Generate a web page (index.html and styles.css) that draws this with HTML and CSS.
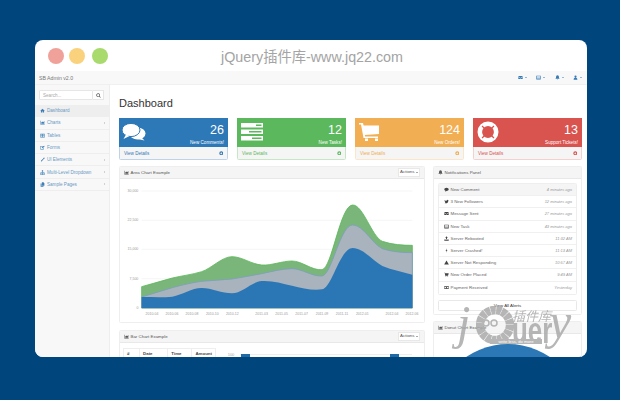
FILE: index.html
```html
<!DOCTYPE html>
<html lang="en">
<head>
    <meta charset="UTF-8">
    <title>SB Admin v2.0</title>
    <link rel="stylesheet" href="styles.css">
</head>
<body>
    <svg class="defs" width="0" height="0">
        <symbol id="i-home" viewBox="0 0 16 16"><path d="M8 2 1 8.500l1 1L3 8.700V14h4v-4h2v4h4V8.700l1 .8 1-1z"/></symbol>
        <symbol id="i-chart" viewBox="0 0 16 16"><path d="M1 2h1.500v11H15v1.500H1zM4 12V8l3-3 3 2 4-4v9z"/></symbol>
        <symbol id="i-table" viewBox="0 0 16 16"><path d="M1 2h14v12H1zm1.500 3v2H7V5zm6.500 0v2h4.500V5zM2.500 9v3H7V9zM9 9v3h4.500V9z" fill-rule="evenodd"/></symbol>
        <symbol id="i-edit" viewBox="0 0 16 16"><path d="M1 3h9v1.500H2.500v8h8V9H12v5H1zM6 8l7-6 2 2-7 6H6z"/></symbol>
        <symbol id="i-wrench" viewBox="0 0 16 16"><path d="M14 2c1 1.500.5 4-2 4.500L5 14c-1 1-3-1-2-2l7.500-7C11 2.500 13 1 14 2z"/></symbol>
        <symbol id="i-sitemap" viewBox="0 0 16 16"><path d="M6 1h4v4H8.700v2.500H14V11h1v4h-4v-4h1.500V9H8.700v2H10v4H6v-4h1.300V9H3.500v2H5v4H1v-4h1V7.500h5.300V5H6z"/></symbol>
        <symbol id="i-files" viewBox="0 0 16 16"><path d="M6 1h5l3 3v8H6zM2 5h3v8h6v2H2z"/></symbol>
        <symbol id="i-mail" viewBox="0 0 16 16"><path d="M1 3h14v2L8 9.500 1 5zm0 3.500L8 11l7-4.500V13H1z"/></symbol>
        <symbol id="i-tasks" viewBox="0 0 16 16"><path d="M1 2h14v12H1zm2 2v2h10V4zm0 3.500v2h10v-2zM3 11v1.500h10V11z" fill-rule="evenodd"/></symbol>
        <symbol id="i-bell" viewBox="0 0 16 16"><path d="M8 1c3 0 4.500 2.500 4.500 5 0 3 1 4.500 2.500 6H1c1.500-1.500 2.500-3 2.500-6C3.500 3.500 5 1 8 1zM6.500 13h3c0 2-3 2-3 0z"/></symbol>
        <symbol id="i-user" viewBox="0 0 16 16"><path d="M8 1.500a3.500 3.500 0 1 1 0 7 3.500 3.500 0 0 1 0-7zM2 15c0-4 2-6 6-6s6 2 6 6z"/></symbol>
        <symbol id="i-comment" viewBox="0 0 16 16"><path d="M8 2c4 0 7 2.300 7 5.500S12 13 8 13l-4 2 .8-2.700C2.500 11.500 1 9.700 1 7.500 1 4.300 4 2 8 2z"/></symbol>
        <symbol id="i-twitter" viewBox="0 0 16 16"><path d="M15 4c-.5.300-1 .5-1.600.5.600-.4 1-.9 1.200-1.600-.5.300-1.100.6-1.800.7a2.800 2.800 0 0 0-4.800 2.600C5.700 6 3.600 5 2.200 3.200c-.8 1.300-.4 3 .9 3.800-.4 0-.8-.1-1.200-.3 0 1.400 1 2.500 2.200 2.800-.4.100-.8.100-1.200 0 .3 1.100 1.400 1.900 2.600 2-1.200.9-2.600 1.300-4.100 1.100C7 15.500 14 13 13.800 5.600c.5-.4.900-1 1.200-1.600z"/></symbol>
        <symbol id="i-upload" viewBox="0 0 16 16"><path d="M8 1l4 5H9.500v4h-3V6H4zM1 11h4v1h6v-1h4v4H1z"/></symbol>
        <symbol id="i-bolt" viewBox="0 0 16 16"><path d="M9.500 1 5 9h3l-1.500 6L11 6.500H8z"/></symbol>
        <symbol id="i-warn" viewBox="0 0 16 16"><path d="M8 1.500 15.500 14.500H.5z"/></symbol>
        <symbol id="i-cart" viewBox="0 0 16 16"><path d="M1 2h2.500l.4 2H15l-1.500 6H5.300l.3 1.500H13V13H4.300L2.300 3.500H1zM5 13.500h2V15H5zm6 0h2V15h-2z"/></symbol>
        <symbol id="i-money" viewBox="0 0 16 16"><path d="M1 3h14v10H1zm1.500 2.500v5h11v-5zM8 6a2 2 0 1 1 0 4 2 2 0 0 1 0-4z" fill-rule="evenodd"/></symbol>
        <symbol id="i-go" viewBox="0 0 16 16"><path d="M8 1a7 7 0 1 1 0 14A7 7 0 0 1 8 1zm-.500 3L6 5.500 7.500 7H4v2h3.500L6 10.500 7.500 12l4-4z" fill-rule="evenodd"/></symbol>
        <symbol id="i-search" viewBox="0 0 16 16"><path d="M7 1a6 6 0 0 1 4.800 9.500l3.400 3.300-1.500 1.500-3.300-3.400A6 6 0 1 1 7 1zm0 2.200a3.800 3.800 0 1 0 0 7.600 3.800 3.800 0 0 0 0-7.600z" fill-rule="evenodd"/></symbol>
    </svg>

    <div class="window">
        <div class="titlebar">
            <div class="dots">
                <span class="dot dot-red"></span>
                <span class="dot dot-yellow"></span>
                <span class="dot dot-green"></span>
            </div>
            <div class="site-title">jQuery插件库-www.jq22.com</div>
        </div>

        <nav class="navbar">
            <span class="brand">SB Admin v2.0</span>
            <div class="nav-icons">
                <span class="nav-item"><svg class="ico"><use href="#i-mail"/></svg><i class="caret"></i></span>
                <span class="nav-item"><svg class="ico"><use href="#i-tasks"/></svg><i class="caret"></i></span>
                <span class="nav-item"><svg class="ico"><use href="#i-bell"/></svg><i class="caret"></i></span>
                <span class="nav-item"><svg class="ico"><use href="#i-user"/></svg><i class="caret"></i></span>
            </div>
        </nav>

        <div class="layout">
            <aside class="sidebar">
                <div class="search">
                    <span class="search-input">Search...</span>
                    <span class="search-btn"><svg class="ico"><use href="#i-search"/></svg></span>
                </div>
                <ul class="side-menu">
                    <li class="active"><svg class="ico"><use href="#i-home"/></svg>Dashboard</li>
                    <li><svg class="ico"><use href="#i-chart"/></svg>Charts<i class="arrow"></i></li>
                    <li><svg class="ico"><use href="#i-table"/></svg>Tables</li>
                    <li><svg class="ico"><use href="#i-edit"/></svg>Forms</li>
                    <li><svg class="ico"><use href="#i-wrench"/></svg>UI Elements<i class="arrow"></i></li>
                    <li><svg class="ico"><use href="#i-sitemap"/></svg>Multi-Level Dropdown<i class="arrow"></i></li>
                    <li><svg class="ico"><use href="#i-files"/></svg>Sample Pages<i class="arrow"></i></li>
                </ul>
            </aside>

            <main class="content">
                <h1>Dashboard</h1>

                <section class="cards">
                    <div class="card card-blue">
                        <div class="card-top">
                            <svg class="card-icon" viewBox="0 0 24 18">
                                <ellipse cx="15.500" cy="10.500" rx="8" ry="6"/>
                                <path d="M19 14l3.500 3.500-7-1.500z"/>
                                <ellipse class="cut" cx="9" cy="7" rx="9" ry="6.600"/>
                                <path class="front" d="M4 11.500 1.500 16l6-3z"/>
                            </svg>
                            <div class="card-text"><b>26</b><span>New Comments!</span></div>
                        </div>
                        <div class="card-foot">View Details<svg class="ico"><use href="#i-go"/></svg></div>
                    </div>
                    <div class="card card-green">
                        <div class="card-top">
                            <svg class="card-icon" viewBox="0 0 24 18">
                                <path d="M1 0h22v4.500H1zM1 6.500h22V11H1zM1 13h22v4.500H1z"/>
                                <path class="slit" d="M16 1.500h5.500v1.500H16zM9 8h12.500v1.500H9zM12 14.500h9.500V16H12z"/>
                            </svg>
                            <div class="card-text"><b>12</b><span>New Tasks!</span></div>
                        </div>
                        <div class="card-foot">View Details<svg class="ico"><use href="#i-go"/></svg></div>
                    </div>
                    <div class="card card-orange">
                        <div class="card-top">
                            <svg class="card-icon" viewBox="0 0 24 18">
                                <path d="M1 0h4l.6 2.500H21V11L6.800 12l.3 1.500H20V15H5.500L3 1.500H1zM7 15.500h3V18H7zm10 0h3V18h-3z"/>
                            </svg>
                            <div class="card-text"><b>124</b><span>New Orders!</span></div>
                        </div>
                        <div class="card-foot">View Details<svg class="ico"><use href="#i-go"/></svg></div>
                    </div>
                    <div class="card card-red">
                        <div class="card-top">
                            <svg class="card-icon" viewBox="0 0 22 22">
                                <circle cx="11" cy="11" r="8.200" fill="none" stroke="#fff" stroke-width="4.600"/>
                                <path class="slit" d="M5.500 4.500l3 3-.9.900-3-3zM16.500 4.500l-3 3 .9.900 3-3zM5.500 17.500l3-3-.9-.900-3 3zM16.500 17.500l-3-3 .9-.900 3 3z"/>
                            </svg>
                            <div class="card-text"><b>13</b><span>Support Tickets!</span></div>
                        </div>
                        <div class="card-foot">View Details<svg class="ico"><use href="#i-go"/></svg></div>
                    </div>
                </section>

                <div class="columns">
                    <div class="col-left">
                        <section class="panel area-panel">
                            <div class="panel-head"><span><svg class="ico"><use href="#i-chart"/></svg>Area Chart Example</span><span class="btn-actions">Actions<i class="caret"></i></span></div>
                            <svg class="area-chart" viewBox="30 57 912 432">
                                <g class="grid">
                                    <path d="M95 93H907M95 181H907M95 268H907M95 356H907M95 444H907"/>
                                </g>
                                <g class="labels y-labels">
                                    <text x="85" y="96">30,000</text>
                                    <text x="85" y="184">22,500</text>
                                    <text x="85" y="271">15,000</text>
                                    <text x="85" y="359">7,500</text>
                                    <text x="85" y="447">0</text>
                                </g>
                                <path class="area-green" d="M95 380C125 372 157 362 187 354C217 347 245 344 275 335C305 325 336 290 366 290C396 290 425 313 455 315C485 317 516 303 546 303C576 303 606 332 636 329C666 326 690 135 728 135C760 135 785 230 817 244C847 254 877 256 907 256V444H95Z"/>
                                <path class="area-gray" d="M95 411C125 402 157 392 187 383C217 375 245 368 275 364C305 361 336 360 366 357C396 352 425 347 455 341C485 335 516 326 546 326C576 326 606 350 636 348C666 345 690 195 728 195C760 195 785 250 817 266C847 276 877 278 907 278V444H95Z"/>
                                <path class="area-blue" d="M95 411C125 411 157 413 187 410C217 405 245 384 275 384C305 384 336 400 366 400C396 400 425 365 455 363C485 361 516 370 546 377C576 384 606 392 636 388C666 384 690 264 728 264C760 264 785 300 817 318C847 330 877 336 907 344V444H95Z"/>
                                <g class="labels x-labels">
                                    <text x="126" y="464">2010-04</text>
                                    <text x="186" y="464">2010-06</text>
                                    <text x="246" y="464">2010-08</text>
                                    <text x="307" y="464">2010-10</text>
                                    <text x="367" y="464">2010-12</text>
                                    <text x="455" y="464">2011-03</text>
                                    <text x="515" y="464">2011-05</text>
                                    <text x="575" y="464">2011-07</text>
                                    <text x="636" y="464">2011-09</text>
                                    <text x="696" y="464">2011-11</text>
                                    <text x="757" y="464">2012-01</text>
                                    <text x="846" y="464">2012-04</text>
                                    <text x="906" y="464">2012-06</text>
                                </g>
                            </svg>
                        </section>

                        <section class="panel">
                            <div class="panel-head"><span><svg class="ico"><use href="#i-chart"/></svg>Bar Chart Example</span><span class="btn-actions">Actions<i class="caret"></i></span></div>
                            <div class="bar-body">
                                <table class="bar-table">
                                    <tr><th class="c-num">#</th><th class="c-date">Date</th><th class="c-time">Time</th><th>Amount</th></tr>
                                </table>
                                <svg class="bar-chart" viewBox="0 0 197 30">
                                    <text x="15" y="7">100</text>
                                    <path d="M24 5.500H196"/>
                                    <rect x="25" y="5" width="9" height="25"/>
                                    <rect x="174" y="5" width="9" height="25"/>
                                </svg>
                            </div>
                        </section>
                    </div>

                    <div class="col-right">
                        <section class="panel notif-panel">
                            <div class="panel-head"><span><svg class="ico"><use href="#i-bell"/></svg>Notifications Panel</span></div>
                            <div class="notif-body">
                                <ul class="notif-list">
                                    <li class="first"><span><svg class="ico"><use href="#i-comment"/></svg>New Comment</span><em>4 minutes ago</em></li>
                                    <li><span><svg class="ico"><use href="#i-twitter"/></svg>3 New Followers</span><em>12 minutes ago</em></li>
                                    <li><span><svg class="ico"><use href="#i-mail"/></svg>Message Sent</span><em>27 minutes ago</em></li>
                                    <li><span><svg class="ico"><use href="#i-tasks"/></svg>New Task</span><em>43 minutes ago</em></li>
                                    <li><span><svg class="ico"><use href="#i-upload"/></svg>Server Rebooted</span><em>11:32 AM</em></li>
                                    <li><span><svg class="ico"><use href="#i-bolt"/></svg>Server Crashed!</span><em>11:13 AM</em></li>
                                    <li><span><svg class="ico"><use href="#i-warn"/></svg>Server Not Responding</span><em>10:57 AM</em></li>
                                    <li><span><svg class="ico"><use href="#i-cart"/></svg>New Order Placed</span><em>9:49 AM</em></li>
                                    <li><span><svg class="ico"><use href="#i-money"/></svg>Payment Received</span><em>Yesterday</em></li>
                                </ul>
                                <div class="btn-alerts">View All Alerts</div>
                            </div>
                        </section>

                        <section class="panel">
                            <div class="panel-head"><span><svg class="ico"><use href="#i-chart"/></svg>Donut Chart Example</span></div>
                            <div class="donut-body"><div class="donut"></div></div>
                        </section>
                    </div>
                </div>
            </main>
        </div>

        <!-- watermark sits over the panels -->
        <div class="watermark">
            <span class="wm-j">j</span>
            <svg class="wm-q" viewBox="0 0 38 38">
                <circle cx="19" cy="19" r="15" fill="none" stroke="#a9a9a9" stroke-width="8.500" stroke-dasharray="5 .5"/>
                <circle cx="10" cy="17" r="3" fill="none" stroke="#a9a9a9" stroke-width="1.500"/>
                <circle cx="18" cy="17" r="3" fill="none" stroke="#a9a9a9" stroke-width="1.500"/>
            </svg>
            <span class="wm-cn">插件库</span>
            <span class="wm-uer">uer</span>
            <span class="wm-y">y</span>
            <span class="wm-tag">write less, do more</span>
        </div>
    </div>
</body>
</html>
```

FILE: styles.css
```css
html, body { height: 400px; overflow: hidden; }
body {
    margin: 0;
    padding: 40px 33px 0 35px;
    box-sizing: border-box;
    background-color: #00457c;
    font-family: "Liberation Sans", "Noto Sans CJK SC", sans-serif;
    font-size: 4.6px;
    color: #777;
}
.defs { position: absolute; }
ul { list-style: none; margin: 0; padding: 0; }

.window {
    position: relative;
    height: 317px;
    background: white;
    border-radius: 8px;
    overflow: hidden;
}

.ico { width: 5px; height: 5px; fill: currentColor; margin-right: 1.500px; vertical-align: -0.8px; flex: none; }

/* title bar */
.titlebar { height: 31px; display: flex; align-items: center; position: relative; }
.dots { display: flex; gap: 5px; padding-left: 13px; }
.dot { width: 16px; height: 16px; border-radius: 50%; }
.dot-red { background: #f0a29a; }
.dot-yellow { background: #fad27d; }
.dot-green { background: #a8da6d; margin-left: 2px; }
.site-title { flex: 1; text-align: center; font-size: 14.300px; color: #a4a4a4; margin-left: -71px; }

/* top nav */
.navbar {
    height: 14px;
    background: #f8f8f8;
    border-bottom: 1px solid #f0f0f0;
    box-sizing: border-box;
    display: flex;
    align-items: center;
    justify-content: space-between;
    padding: 0 5px 0 4px;
}
.brand { font-size: 5.200px; color: #777; }
.nav-icons { display: flex; gap: 9.300px; color: #337ab7; }
.nav-item { display: flex; align-items: center; }
.nav-item .ico { margin-right: 2px; }
.caret {
    display: inline-block;
    width: 0;
    height: 0;
    border-left: 1.500px solid transparent;
    border-right: 1.500px solid transparent;
    border-top: 1.500px solid currentColor;
}

.layout { display: flex; height: 272px; }

/* sidebar */
.sidebar { width: 74px; background: #f8f8f8; border-right: 1px solid #eee; flex: none; }
.search { display: flex; padding: 5px 5px 5px 4px; height: 10px; }
.search-input {
    flex: 1;
    background: white;
    border: 1px solid #e6e6e6;
    border-radius: 1px;
    color: #aaa;
    padding-left: 3px;
    line-height: 9px;
}
.search-btn {
    width: 11px;
    box-sizing: border-box;
    background: white;
    border: 1px solid #e6e6e6;
    border-left: none;
    color: #555;
    display: flex;
    align-items: center;
    justify-content: center;
}
.search-btn .ico { margin: 0; }
.side-menu li {
    height: 12.300px;
    box-sizing: border-box;
    border-bottom: 1px solid #eeeeee;
    display: flex;
    align-items: center;
    padding-left: 5px;
    color: #6a98c2;
}
.side-menu .ico { color: #3d7fb8; margin-right: 2px; }
.side-menu li.active { background: #eeeeee; }
.arrow {
    margin-left: auto;
    margin-right: 4px;
    border-top: 1.300px solid transparent;
    border-bottom: 1.300px solid transparent;
    border-right: 1.500px solid #aaa;
}

/* main */
.content { flex: 1; padding: 0 5px 0 9px; min-width: 0; }
h1 { font-size: 11px; font-weight: normal; color: #333; margin: 0; height: 33px; line-height: 36px; }

.cards { display: grid; grid-template-columns: repeat(4, 109px); gap: 9px; }
.card { border: 1px solid; border-radius: 1.500px; height: 42px; box-sizing: border-box; display: flex; flex-direction: column; }
.card-top { height: 29px; flex: none; display: flex; justify-content: space-between; padding: 0 4px 0 3px; color: white; margin: -1px -1px 0; }
.card-icon { width: 24px; height: 18px; margin-top: 5px; fill: white; }
.card-text { text-align: right; display: flex; flex-direction: column; }
.card-text b { font-size: 12.500px; font-weight: normal; line-height: 14px; margin-top: 5px; }
.card-text span { line-height: 5px; margin-top: 2.500px; }
.card-foot {
    flex: 1;
    background: #f5f5f5;
    display: flex;
    align-items: center;
    justify-content: space-between;
    padding: 0 4px;
}
.card-foot .ico { margin: 0; width: 4.500px; height: 4.500px; }
.card-blue { border-color: #bed3e7; color: #337ab7; }
.card-blue .card-top { background: #2d78b7; }
.card-blue .cut { stroke: #2d78b7; stroke-width: 1; }
.card-green { border-color: #c6e6c6; color: #5cb85c; }
.card-green .card-top { background: #5cb85c; }
.card-green .slit { fill: #5cb85c; }
.card-orange { border-color: #fbe6ca; color: #f0ad4e; }
.card-orange .card-top { background: #f2ae52; }
.card-red { border-color: #f4d0ce; color: #d9534f; }
.card-red .card-top { background: #d9534f; padding-left: 4px; }
.card-red .slit { fill: #d9534f; }
.card-red .card-icon { width: 22px; height: 22px; margin-top: 3px; }

.columns { display: grid; grid-template-columns: 306px 149px; gap: 8px; margin-top: 6px; }
.col-left, .col-right { display: flex; flex-direction: column; }
.col-left { gap: 7px; }
.col-right { gap: 6px; }

.panel { border: 1px solid #eeeeee; border-radius: 1.500px; box-sizing: border-box; font-size: 4.400px; }
.panel-head {
    height: 12px;
    box-sizing: border-box;
    background: #f5f5f5;
    border-bottom: 1px solid #e8e8e8;
    display: flex;
    align-items: center;
    justify-content: space-between;
    padding: 0 4px;
    color: #555;
}
.btn-actions {
    background: white;
    border: 1px solid #e8e8e8;
    padding: 1px 1.500px;
    line-height: 4.500px;
    display: flex;
    align-items: center;
    gap: 1px;
}

/* area chart */
.area-panel { height: 157px; }
.area-chart { display: block; width: 304px; height: 144px; }
.grid path { stroke: #f0f0f0; stroke-width: 2; fill: none; }
.labels text { font-size: 10.500px; fill: #9a9a9a; text-anchor: middle; }
.y-labels text { text-anchor: end; }
.area-green { fill: #7ab67a; stroke: #5cb85c; stroke-width: 2.500; }
.area-gray { fill: #a8b3be; stroke: #7d9fbe; stroke-width: 2.500; }
.area-blue { fill: #2b77b6; }

/* bar chart */
.bar-body { display: flex; align-items: flex-start; padding: 5px 4px 0 3px; }
.bar-table { border-collapse: collapse; width: 93px; flex: none; }
.bar-table th { border: 1px solid #eeeeee; text-align: left; vertical-align: top; line-height: 10px; color: #444; height: 12px; padding: 0 3px; font-weight: bold; }
.c-num { width: 10px; }
.c-date { width: 23px; }
.c-time { width: 18px; }
.bar-chart { display: block; width: 197px; height: 30px; margin-top: 1px; flex: none; }
.bar-chart text { font-size: 4px; fill: #aaa; text-anchor: middle; }
.bar-chart path { stroke: #eeeeee; stroke-width: 1; }
.bar-chart rect { fill: #1f69a5; }

/* notifications */
.notif-panel { height: 149px; }
.notif-body { padding: 4px 4px 0; }
.notif-list { border: 1px solid #eeeeee; border-radius: 1.500px; }
.notif-list li {
    height: 12.200px;
    box-sizing: border-box;
    border-bottom: 1px solid #f0f0f0;
    display: flex;
    align-items: center;
    justify-content: space-between;
    padding: 0 4px 0 5px;
    color: #666;
}
.notif-list li:last-child { border-bottom: none; }
.notif-list .first { background: #f5f5f5; }
.notif-list .ico { color: #444; }
.notif-list em { font-style: italic; color: #999; font-size: 4px; }
.btn-alerts {
    margin-top: 5px;
    height: 11px;
    line-height: 10px;
    border: 1px solid #e8e8e8;
    box-sizing: border-box;
    border-radius: 1.500px;
    text-align: center;
    color: #333;
}

/* donut */
.donut-body { padding-top: 10px; height: 160px; overflow: hidden; }
.donut { width: 148px; height: 148px; margin: 0 auto; border-radius: 50%; background: #2c77b5; }

/* watermark */
.watermark { position: absolute; left: 420px; top: 262px; width: 125px; height: 50px; opacity: .85; color: #a9a9a9; }
.watermark span { position: absolute; }
.wm-j { left: 2px; top: -4px; font: italic 48px/50px "Liberation Serif", serif; }
.wm-q { position: absolute; left: 21px; top: 4px; width: 38px; height: 38px; }
.wm-cn { left: 57px; top: 7px; font-size: 13px; line-height: 15px; font-style: italic; }
.wm-uer { left: 57px; top: 10.500px; font: bold 36px/36px "Liberation Sans", sans-serif; transform: scaleX(.72); transform-origin: left top; }
.wm-y { left: 94px; top: -8px; font: italic 50px/54px "Liberation Serif", serif; }
.wm-tag { left: 35px; top: 37px; width: 52px; height: 5px; line-height: 5px; background: #a9a9a9; color: white; font-size: 4.200px; text-align: center; }
```
